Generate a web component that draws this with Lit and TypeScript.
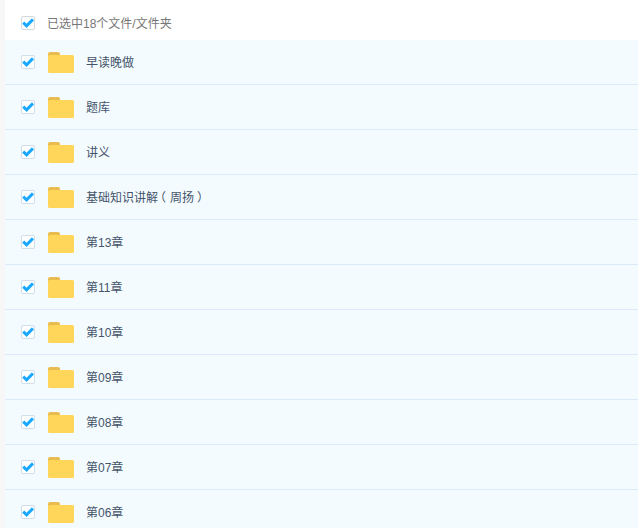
import { LitElement, html, css } from "lit";
import { customElement } from "lit/decorators.js";

const names = [
  html`早读晚做`, html`题库`, html`讲义`,
  html`基础知识讲解<span class="open">（</span>周扬<span class="close">）</span>`,
  html`第13章`, html`第11章`, html`第10章`, html`第09章`, html`第08章`, html`第07章`, html`第06章`,
];

const check = html`<span class="cb"><svg width="12" height="10" viewBox="0 0 12 10"><path d="M1.2 4.6 L4.6 7.8 L11 1.4" fill="none" stroke="#1aa9ff" stroke-width="3"/></svg></span>`;
const folder = html`<svg class="folder" width="26" height="21" viewBox="0 0 26 21"><path d="M0 2 Q0 0 2 0 H10 Q12 0 12 2 V6 H0 Z" fill="#e9bc50"/><rect x="0" y="3" width="26" height="18" rx="1.5" fill="#ffd65a"/></svg>`;

@customElement("app-root")
export class AppRoot extends LitElement {
  static styles = css`
    :host { display: block; height: 528px; overflow: hidden; background: #f7f7f7; padding-left: 5px;
      font-family: "Liberation Sans", "Noto Sans CJK SC", sans-serif; font-size: 12px; }
    .head { height: 40px; box-sizing: border-box; background: #fff; display: flex; align-items: center; padding: 6px 0 0 16px; color: #777; }
    .head .cb { margin-right: 12px; border-color: #d4d9de; }
    .head .txt { margin-top: -2px; }
    .row { height: 45px; box-sizing: border-box; background: #f3fbff; border-bottom: 1px solid #daeafa; display: flex; align-items: center; padding-left: 16px; color: #45546a; }
    .row .txt { margin-top: -1px; }
    .cb { width: 14px; height: 14px; box-sizing: border-box; border: 1px solid #cfdfee; border-radius: 2px; background: #fff; display: flex; align-items: center; justify-content: center; flex: none; }
    .folder { margin: 1px 12px 0 13px; flex: none; }
    .open, .close { font-feature-settings: "halt"; }
    .open { padding: 0 4px 0 2px; }
    .close { padding: 0 3px; }
  `;
  render() {
    return html`
      <div class="head">${check}<span class="txt">已选中18个文件/文件夹</span></div>
      ${names.map(n => html`<div class="row">${check}${folder}<span class="txt">${n}</span></div>`)}
    `;
  }
}
